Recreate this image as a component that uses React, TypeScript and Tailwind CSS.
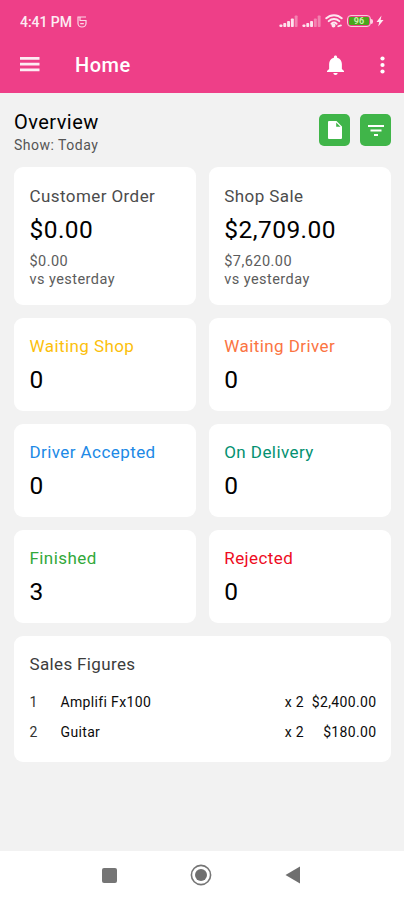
import React from "react";

type Stat = {
    label: string;
    value: string;
    labelColor: string;
    compare?: string;
};

type Sale = {
    name: string;
    qty: number;
    total: string;
};

const STATS: Stat[] = [
    { label: "Customer Order", value: "$0.00", labelColor: "text-[#4c4c4c]", compare: "$0.00" },
    { label: "Shop Sale", value: "$2,709.00", labelColor: "text-[#4c4c4c]", compare: "$7,620.00" },
    { label: "Waiting Shop", value: "0", labelColor: "text-[#fcbf0c]" },
    { label: "Waiting Driver", value: "0", labelColor: "text-[#fb7442]" },
    { label: "Driver Accepted", value: "0", labelColor: "text-[#2089e6]" },
    { label: "On Delivery", value: "0", labelColor: "text-[#049171]" },
    { label: "Finished", value: "3", labelColor: "text-[#32a83a]" },
    { label: "Rejected", value: "0", labelColor: "text-[#ee0c1e]" },
];

const SALES: Sale[] = [
    { name: "Amplifi Fx100", qty: 2, total: "$2,400.00" },
    { name: "Guitar", qty: 2, total: "$180.00" },
];

// Signal bars; `strong` is how many of the five are lit
function Signal({ strong }: { strong: number }) {
    return (
        <svg width="19" height="12" viewBox="0 0 19 12" fill="#fff" aria-hidden="true">
            {[2.5, 4, 6, 8.5, 11.5].map((h, i) => (
                <rect key={h} x={0.5 + i * 3.8} y={12 - h} width="2.9" height={h} rx="0.8" opacity={i < strong ? 0.85 : 0.35} />
            ))}
        </svg>
    );
}

function StatusBar() {
    return (
        <div className="flex h-[38px] items-end pr-[20px] pb-[7px] pl-5 text-white">
            <span className="text-[14px] leading-[17px] font-medium tracking-[-0.05px] opacity-90">4:41 PM</span>
            <svg className="mb-[3px] ml-[5px]" width="10" height="12" viewBox="0 0 10 12" fill="none" stroke="#fff" strokeWidth="1.2" opacity="0.8" aria-hidden="true">
                <path d="M9 1H1v6.500C1 9.500 2.900 11 5 11s4-1.500 4-3.500V4.500H3V1M3.200 7.700h3.600" />
            </svg>
            <div className="mb-[3px] ml-auto flex items-center">
                <Signal strong={4} />
                <span className="w-1" />
                <Signal strong={3} />
                <svg className="ml-1" width="18" height="14" viewBox="0 0 18 14" fill="none" stroke="#fff" strokeWidth="2" strokeLinecap="round" opacity="0.88" aria-hidden="true">
                    <path d="M1.300 4.300C5.600.200 12.400.200 16.700 4.300M3.700 7.100c3-2.900 7.600-2.900 10.600 0M6.500 9.700c1.500-1.400 3.500-1.400 5 0" />
                    <circle cx="8.500" cy="11.500" r="1" fill="#fff" />
                    <path d="M13.200 12.300l2.800-.9" strokeWidth="1.700" />
                </svg>
                <div className="ml-1 h-[12px] w-[24px] rounded-[4px] border-[1.5px] border-[#fbc9dc] p-[1px]">
                    <div className="flex h-full items-center justify-center rounded-[1px] bg-[#4aa51c]">
                        <span className="text-[9px] leading-none font-bold text-[#c8f0a8]">96</span>
                    </div>
                </div>
                <span className="h-[5px] w-[2px] rounded-r-sm bg-[#fbd3e3]" />
                <svg className="ml-[3px]" width="8" height="12" viewBox="0 0 8 12" fill="#fff" opacity="0.9" aria-hidden="true">
                    <path d="M5.500 0.500L0.500 7h2.700L2.200 11.500 7.500 5H4.600z" />
                </svg>
            </div>
        </div>
    );
}

function AppBar() {
    return (
        <div className="flex h-[55px] items-center pr-[19.5px] pb-[2px] pl-5 text-white">
            <svg width="20" height="15" viewBox="0 0 20 15" fill="#fff" opacity="0.9" aria-label="Menu">
                <path d="M0 0h19.500v2.700H0zM0 5.800h19.500v2.700H0zM0 11.600h19.500v2.700H0z" />
            </svg>
            <h1 className="ml-[35px] text-[20px] leading-6 font-medium tracking-[0.5px]">Home</h1>
            <svg className="mr-[36px] ml-auto" width="17" height="20" viewBox="4 2 16 20" preserveAspectRatio="none" fill="#fff" aria-label="Notifications">
                <path d="M12 22c1.100 0 2-.9 2-2h-4c0 1.100.89 2 2 2zm6-6v-5c0-3.070-1.640-5.640-4.500-6.320V4c0-.83-.67-1.500-1.500-1.500s-1.500.67-1.500 1.500v.68C7.630 5.360 6 7.920 6 11v5l-2 2v1h16v-1l-2-2z" />
            </svg>
            <svg width="5" height="18" viewBox="0 0 5 18" fill="#fff" aria-label="More">
                <circle cx="2.500" cy="2.500" r="2.100" />
                <circle cx="2.500" cy="9" r="2.100" />
                <circle cx="2.500" cy="15.500" r="2.100" />
            </svg>
        </div>
    );
}

function StatCard({ stat }: { stat: Stat }) {
    return (
        <div className={`rounded-[9px] bg-white px-[15.5px] ${stat.compare ? "h-[138px] pt-[17px]" : "h-[93px] pt-4"}`}>
            <p className={`text-[17px] leading-6 tracking-[0.42px] ${stat.labelColor}`}>{stat.label}</p>
            <p className="mt-[5.5px] text-[24.5px] leading-8 tracking-[0.45px] text-black">{stat.value}</p>
            {stat.compare && (
                <p className="mt-[7px] text-[14.5px] leading-[18.5px] tracking-[0.45px] text-[#5c5c5c]">
                    {stat.compare}
                    <br />
                    vs yesterday
                </p>
            )}
        </div>
    );
}

function Overview() {
    return (
        <div className="flex h-[74px] items-start justify-between pt-[17px]">
            <div>
                <h2 className="text-[20px] leading-6 tracking-[0.45px] text-black">Overview</h2>
                <p className="mt-[2px] text-[14px] leading-[18px] tracking-[0.5px] text-[#555555]">Show: Today</p>
            </div>
            <div className="mt-[4px] flex gap-[10px]">
                <button aria-label="Report" className="flex h-8 w-[31px] items-center justify-center rounded-[5px] bg-[#40b549]">
                    <svg width="14" height="18" viewBox="0 0 14 18" fill="#fff">
                        <path fillRule="evenodd" d="M1 0h7.500L14 5.500V17a1 1 0 0 1-1 1H1a1 1 0 0 1-1-1V1a1 1 0 0 1 1-1zm7.200 1.500v4.300h4.300z" />
                    </svg>
                </button>
                <button aria-label="Filter" className="flex h-8 w-[31px] items-center justify-center rounded-[5px] bg-[#40b549]">
                    <svg width="16" height="11" viewBox="0 0 16 11" fill="#fff">
                        <path d="M0 0h16v2H0zM2.500 4.500h11v2h-11zM6 9h4v2H6z" />
                    </svg>
                </button>
            </div>
        </div>
    );
}

function SalesFigures() {
    return (
        <section className="mt-[13px] h-[126px] rounded-[9px] bg-white pt-4 pr-[14.5px] pl-[15.5px]">
            <h3 className="text-[17px] leading-6 tracking-[0.35px] text-[#3c3c3c]">Sales Figures</h3>
            <div className="mt-[10.5px] text-[14px] leading-[30px] tracking-[0.35px] text-[#0c0c0c]">
                {SALES.map((sale, i) => (
                    <div key={sale.name} className="flex">
                        <span className="w-[31px] text-[#333333]">{i + 1}</span>
                        <span className="flex-1">{sale.name}</span>
                        <span>x {sale.qty}</span>
                        <span className="w-[72.500px] text-right">{sale.total}</span>
                    </div>
                ))}
            </div>
        </section>
    );
}

function NavBar() {
    return (
        <nav className="flex h-[49px] items-center justify-between bg-white pr-[104px] pb-px pl-[102px]">
            <span className="h-[15px] w-[15px] rounded-[2px] bg-[#757575]" />
            <svg width="22" height="22" viewBox="0 0 22 22" aria-hidden="true">
                <circle cx="11" cy="11" r="9.600" fill="none" stroke="#757575" strokeWidth="1.600" />
                <circle cx="11" cy="11" r="6" fill="#6f6f6f" />
            </svg>
            <svg width="15" height="18" viewBox="0 0 15 18" fill="#6f6f6f" aria-hidden="true">
                <path d="M15 0.500v17L0.500 9z" />
            </svg>
        </nav>
    );
}

export default function App() {
    return (
        <div className="flex h-[900px] w-[404px] flex-col overflow-hidden bg-[#f2f2f2] font-['Roboto',sans-serif]">
            <header className="h-[93px] shrink-0 bg-[#ee3f88]">
                <StatusBar />
                <AppBar />
            </header>
            <main className="flex-1 pr-[13px] pl-[14px]">
                <Overview />
                <div className="grid grid-cols-2 gap-x-[12.5px] gap-y-[13px]">
                    {STATS.map((stat) => (
                        <StatCard key={stat.label} stat={stat} />
                    ))}
                </div>
                <SalesFigures />
            </main>
            <NavBar />
        </div>
    );
}
